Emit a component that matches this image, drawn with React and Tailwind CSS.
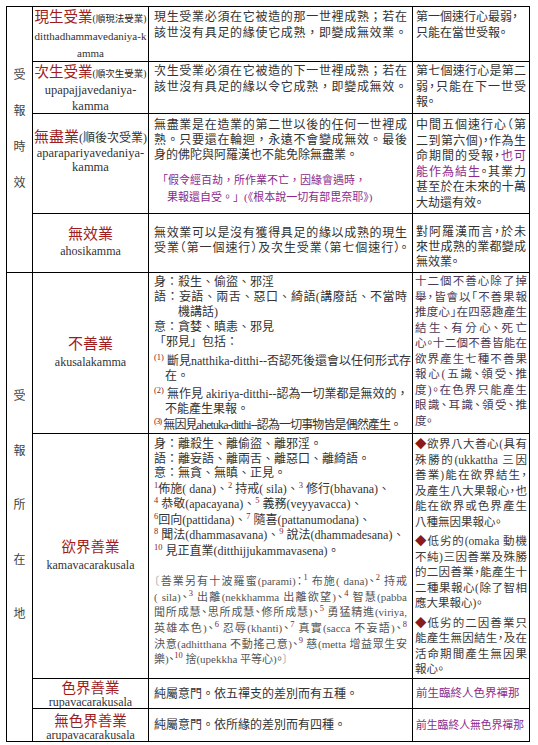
import React from "react";

const C = "border-r border-b border-black overflow-hidden";
const RED = "text-[#a01c1c]";
const PUR = "text-[#8b2b8b]";

function S({ c }) {
  return <span className="text-[8.5px] leading-none align-super text-[#8b1a1a]">{c}</span>;
}
function J({ children, className = "" }) {
  return <div className={"text-justify [text-align-last:justify] " + className}>{children}</div>;
}
function L({ children, className = "" }) {
  return <div className={"whitespace-nowrap " + className}>{children}</div>;
}
function D() {
  return <span className="text-[#8b1a1a]">◆</span>;
}

export default function App() {
  return (
    <div className="w-[538px] h-[745px] bg-white pl-[6px] pt-[6px] font-['Liberation_Serif','Noto_Sans_CJK_TC',serif] text-[#333]">
      <div className="grid w-[524px] grid-cols-[26px_116px_264px_117px] grid-rows-[55px_52px_100px_59px_161px_245px_30px_33px] border-l border-t border-black">
        {/* Section 1 label */}
        <div className={C + " row-span-4 flex flex-col items-center justify-center gap-[24px] pb-[21px] text-[12px] leading-[12px] text-[#444]"}>
          <span>受</span>
          <span>報</span>
          <span>時</span>
          <span>效</span>
        </div>

        {/* Row 1 */}
        <div className={C + " flex flex-col items-center pt-[1px]"}>
          <div className="leading-[18px] whitespace-nowrap">
            <span className={"text-[14.5px] " + RED}>現生受業</span>
            <span className="text-[9.5px] text-[#222]">(順現法受業)</span>
          </div>
          <div className="text-[11px] leading-[17px]">ditthadhammavedaniya-k</div>
          <div className="text-[11px] leading-[17px]">amma</div>
        </div>
        <div className={C + " px-[5px] pt-[2px] text-[12px] leading-[16px]"}>
          <J>現生受業必須在它被造的那一世裡成熟；若在</J>
          <J>該世沒有具足的緣使它成熟，即變成無效業。</J>
        </div>
        <div className={C + " px-[3px] pt-[2px] text-[12px] leading-[16px] [font-feature-settings:'halt']"}>
          <L>第一個速行心最弱，</L>
          <L>只能在當世受報。</L>
        </div>

        {/* Row 2 */}
        <div className={C + " flex flex-col items-center pt-[2px]"}>
          <div className="leading-[16px] whitespace-nowrap">
            <span className={"text-[14.5px] " + RED}>次生受業</span>
            <span className="text-[9.5px] text-[#222]">(順次生受業)</span>
          </div>
          <div className="text-[12.5px] leading-[16px]">upapajjavedaniya-</div>
          <div className="text-[12.5px] leading-[16px]">kamma</div>
        </div>
        <div className={C + " px-[5px] pt-[2px] text-[12px] leading-[15.5px]"}>
          <J>次生受業必須在它被造的下一世裡成熟；若在</J>
          <J>該世沒有具足的緣以令它成熟，即變成無效。</J>
        </div>
        <div className={C + " px-[3px] pt-[2px] text-[12px] leading-[15.5px] [font-feature-settings:'halt']"}>
          <J>第七個速行心是第二</J>
          <J>弱，只能在下一世受</J>
          <L>報。</L>
        </div>

        {/* Row 3 */}
        <div className={C + " flex flex-col items-center pt-[15px]"}>
          <div className="leading-[16px] whitespace-nowrap">
            <span className={"text-[15px] " + RED}>無盡業</span>
            <span className="text-[12px] text-[#333]">(順後次受業)</span>
          </div>
          <div className="text-[12.5px] leading-[14px]">aparapariyavedaniya-</div>
          <div className="text-[12.5px] leading-[14px]">kamma</div>
        </div>
        <div className={C + " px-[5px] pt-[4px] text-[12px] leading-[15px]"}>
          <J>無盡業是在造業的第二世以後的任何一世裡成</J>
          <J>熟。只要還在輪迴，永遠不會變成無效。最後</J>
          <L>身的佛陀與阿羅漢也不能免除無盡業。</L>
          <div className={"mt-[9px] text-[11px] leading-[17px] " + PUR}>
            <L className="ml-[3px]">「假令經百劫，所作業不亡，因緣會遇時，</L>
            <L className="ml-[13px]">果報還自受。」(《根本說一切有部毘奈耶》)</L>
          </div>
        </div>
        <div className={C + " px-[3px] pt-[4px] text-[12px] leading-[15.5px] [font-feature-settings:'halt']"}>
          <J>中間五個速行心（第</J>
          <J>二到第六個)，作為生</J>
          <J>
            命期間的受報，<span className={PUR}>也可</span>
          </J>
          <J>
            <span className={PUR}>能作為結生</span>。其業力
          </J>
          <J>甚至於在未來的十萬</J>
          <L>大劫還有效。</L>
        </div>

        {/* Row 4 */}
        <div className={C + " flex flex-col items-center pt-[12px]"}>
          <div className={"text-[15px] leading-[17px] " + RED}>無效業</div>
          <div className="text-[12px] leading-[17px]">ahosikamma</div>
        </div>
        <div className={C + " px-[5px] pb-[4px] flex flex-col justify-center text-[12px] leading-[15.5px]"}>
          <J>無效業可以是沒有獲得具足的緣以成熟的現生</J>
          <J className="[font-feature-settings:'halt']">受業（第一個速行）及次生受業（第七個速行）。</J>
        </div>
        <div className={C + " px-[3px] pt-[11px] text-[12px] leading-[15px] [font-feature-settings:'halt']"}>
          <J>對阿羅漢而言，於未</J>
          <J>來世成熟的業都變成</J>
          <L>無效業。</L>
        </div>

        {/* Section 2 label */}
        <div className={C + " row-span-4 flex flex-col items-center justify-center gap-[42.5px] pb-[4px] text-[12px] leading-[12px] text-[#444]"}>
          <span>受</span>
          <span>報</span>
          <span>所</span>
          <span>在</span>
          <span>地</span>
        </div>

        {/* Row 5 */}
        <div className={C + " flex flex-col items-center justify-center"}>
          <div className={"text-[15px] leading-[18px] " + RED}>不善業</div>
          <div className="text-[12px] leading-[18px]">akusalakamma</div>
        </div>
        <div className={C + " px-[5px] pt-[1.5px] text-[12px] leading-[15px]"}>
          <L>身：殺生、偷盜、邪淫</L>
          <J>語：妄語、兩舌、惡口、綺語(講廢話、不當時</J>
          <L className="pl-[24px]">機講話)</L>
          <L>意：貪婪、瞋恚、邪見</L>
          <L>「邪見」包括：</L>
          <L className="mt-[3px]">
            <S c="(1)" /> 斷見natthika-ditthi--否認死後還會以任何形式存
          </L>
          <L className="pl-[11px]">在。</L>
          <L className="mt-[2px]">
            <S c="(2)" /> 無作見 akiriya-ditthi--認為一切業都是無效的，
          </L>
          <L className="pl-[11px]">不能產生果報。</L>
          <L className="tracking-[-0.9px]">
            <S c="(3)" /> 無因見ahetuka-ditthi--認為一切事物皆是偶然產生。
          </L>
        </div>
        <div className={C + " px-[2px] pt-[1px] text-[11.5px] leading-[15.5px] text-[#4a3a56] [font-feature-settings:'halt']"}>
          <J>十二個不善心除了掉</J>
          <J>舉，皆會以「不善果報</J>
          <J>推度心」在四惡趣產生</J>
          <J>結生、有分心、死亡</J>
          <J>心。十二個不善皆能在</J>
          <J>欲界產生七種不善果</J>
          <J>報心(五識、領受、推</J>
          <J>度)。在色界只能產生</J>
          <J>眼識、耳識、領受、推</J>
          <L>度。</L>
        </div>

        {/* Row 6 */}
        <div className={C + " flex flex-col items-center justify-center"}>
          <div className={"text-[14.5px] leading-[18px] " + RED}>欲界善業</div>
          <div className="text-[12px] leading-[18px]">kamavacarakusala</div>
        </div>
        <div className={C + " px-[5px] pt-[3px] text-[12px]"}>
          <div className="leading-[14.5px]">
            <L>身：離殺生、離偷盜、離邪淫。</L>
            <L>語：離妄語、離兩舌、離惡口、離綺語。</L>
            <L>意：無貪、無瞋、正見。</L>
            <L>
              <S c="1" />佈施( dana)、<S c="2" /> 持戒( sila)、<S c="3" /> 修行(bhavana)、
            </L>
            <L>
              <S c="4" /> 恭敬(apacayana)、<S c="5" /> 義務(veyyavacca)、
            </L>
            <L>
              <S c="6" />回向(pattidana)、<S c="7" /> 隨喜(pattanumodana)、
            </L>
            <L>
              <S c="8" /> 聞法(dhammasavana)、<S c="9" /> 說法(dhammadesana)、
            </L>
            <L>
              <S c="10" /> 見正直業(ditthijjukammavasena)。
            </L>
          </div>
          <div className="mt-[15px] text-[11px] leading-[15px] text-[#555] [font-feature-settings:'halt']">
            <J>
              <span className="text-[#aaa]">〔</span>善業另有十波羅蜜(parami)：<S c="1" /> 布施( dana)、<S c="2" /> 持戒
            </J>
            <J>
              ( sila)、<S c="3" /> 出離(nekkhamma 出離欲望)、<S c="4" /> 智慧(pabba
            </J>
            <J>
              聞所成慧、思所成慧、修所成慧)、<S c="5" /> 勇猛精進(viriya,
            </J>
            <J>
              英雄本色)、<S c="6" /> 忍辱(khanti)、<S c="7" /> 真實(sacca 不妄語)、<S c="8" />
            </J>
            <J>
              決意(adhitthana 不動搖己意)、<S c="9" /> 慈(metta 增益眾生安
            </J>
            <L>
              樂)、<S c="10" /> 捨(upekkha 平等心)。<span className="text-[#aaa]">〕</span>
            </L>
          </div>
        </div>
        <div className={C + " px-[2px] pt-[3px] text-[11.5px] leading-[15.5px] text-[#3a3a3a] [font-feature-settings:'halt']"}>
          <div>
            <J>
              <D />欲界八大善心(具有
            </J>
            <J>殊勝的(ukkattha 三因</J>
            <J>善業)能在欲界結生，</J>
            <J>及產生八大果報心，也</J>
            <J>能在欲界或色界產生</J>
            <L>八種無因果報心。</L>
          </div>
          <div className="mt-[4px]">
            <J>
              <D />低劣的(omaka 動機
            </J>
            <J>不純)三因善業及殊勝</J>
            <J>的二因善業，能產生十</J>
            <J>二種果報心(除了智相</J>
            <L>應大果報心)。</L>
          </div>
          <div className="mt-[4px]">
            <J>
              <D />低劣的二因善業只
            </J>
            <J>能產生無因結生，及在</J>
            <J>活命期間產生無因果</J>
            <L>報心。</L>
          </div>
        </div>

        {/* Row 7 */}
        <div className={C + " flex flex-col items-center pt-[2px]"}>
          <div className={"text-[14.5px] leading-[15px] " + RED}>色界善業</div>
          <div className="text-[12px] leading-[13px]">rupavacarakusala</div>
        </div>
        <div className={C + " px-[5px] flex items-center text-[12px]"}>
          <L>純屬意門。依五禪支的差別而有五種。</L>
        </div>
        <div className={C + " px-[3px] flex items-center text-[11.5px] " + PUR}>
          <L>前生臨終人色界禪那</L>
        </div>

        {/* Row 8 */}
        <div className={C + " flex flex-col items-center pt-[5px]"}>
          <div className={"text-[14.5px] leading-[15px] " + RED}>無色界善業</div>
          <div className="text-[12px] leading-[13px]">arupavacarakusala</div>
        </div>
        <div className={C + " px-[5px] flex items-center text-[12px]"}>
          <L>純屬意門。依所緣的差別而有四種。</L>
        </div>
        <div className={C + " px-[3px] flex items-center text-[10.8px] " + PUR}>
          <L>前生臨終人無色界禪那</L>
        </div>
      </div>
    </div>
  );
}
